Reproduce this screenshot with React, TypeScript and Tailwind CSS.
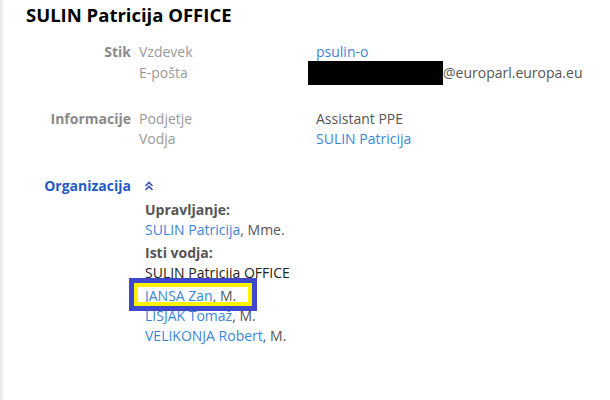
import React from "react";

const font = { fontFamily: '"Open Sans", "Noto Sans", sans-serif' };

export default function App() {
  return (
    <div className="relative w-[610px] h-[400px] bg-white overflow-hidden text-[14px] leading-[20px]" style={font}>
      <div className="absolute left-0 top-0 h-full w-[5px] bg-gradient-to-r from-[#e6e6e6] to-white" />
      <div className="pl-[26px] pt-[2px]">
        <h1 className="text-[18.5px] font-bold text-black leading-[26px]">SULIN Patricija OFFICE</h1>
      </div>
      <div className="mt-[14px] grid grid-cols-[131px_177px_1fr] gap-x-0">
        {/* Stik */}
        <div className="text-right font-bold text-[#8a8a8a]">Stik</div>
        <div className="pl-[8px] text-[#9a9a9a]">Vzdevek</div>
        <div className="text-[#3c86d8] pl-[8px]">psulin-o</div>
        <div />
        <div className="pl-[8px] text-[#9a9a9a] leading-[22px]">E-pošta</div>
        <div className="flex items-center text-[#555] leading-[22px] h-[22px]">
          <span className="inline-block w-[135px] h-[24px] bg-black" />
          <span>@europarl.europa.eu</span>
        </div>

        <div className="col-span-3 h-[25px]" />

        {/* Informacije */}
        <div className="text-right font-bold text-[#8a8a8a]">Informacije</div>
        <div className="pl-[8px] text-[#9a9a9a]">Podjetje</div>
        <div className="pl-[8px] text-[#555]">Assistant PPE</div>
        <div />
        <div className="pl-[8px] text-[#9a9a9a]">Vodja</div>
        <div className="pl-[8px] text-[#3c86d8]">SULIN Patricija</div>

        <div className="col-span-3 h-[27px]" />

        {/* Organizacija */}
        <div className="text-right font-bold text-[#1f5bc6]">Organizacija</div>
        <div className="col-span-2 pl-[13px] flex flex-col">
          <div className="h-[20px] flex items-center">
            <svg width="10" height="10" viewBox="0 0 10 10" fill="none" stroke="#3a4fb8" strokeWidth="1.6">
              <path d="M1.5 5 L5 1.5 L8.5 5" />
              <path d="M1.5 9 L5 5.5 L8.5 9" />
            </svg>
          </div>
          <div className="pl-[1px] mt-[4px] font-bold text-[#555]">Upravljanje:</div>
          <div className="pl-[1px]">
            <span className="text-[#3c86d8]">SULIN Patricija</span>
            <span className="text-[#555]">, Mme.</span>
          </div>
          <div className="pl-[1px] mt-[3px] font-bold text-[#555]">Isti vodja:</div>
          <div className="pl-[1px] text-[#222]">SULIN Patricija OFFICE</div>
          <div className="relative pl-[1px] mt-[3px] h-[20px]">
            <span className="text-[#3c86d8]">JANSA Zan</span>
            <span className="text-[#555]">, M.</span>
            <div className="absolute left-[-15px] top-[-8px] w-[128px] h-[33px] border-[5px] border-[#3f48cc]">
              <div className="w-full h-full border-[4px] border-[#fff200]" />
            </div>
          </div>
          <div className="pl-[1px]">
            <span className="text-[#3c86d8]">LISJAK Tomaž</span>
            <span className="text-[#555]">, M.</span>
          </div>
          <div className="pl-[1px]">
            <span className="text-[#3c86d8]">VELIKONJA Robert</span>
            <span className="text-[#555]">, M.</span>
          </div>
        </div>
      </div>
    </div>
  );
}
